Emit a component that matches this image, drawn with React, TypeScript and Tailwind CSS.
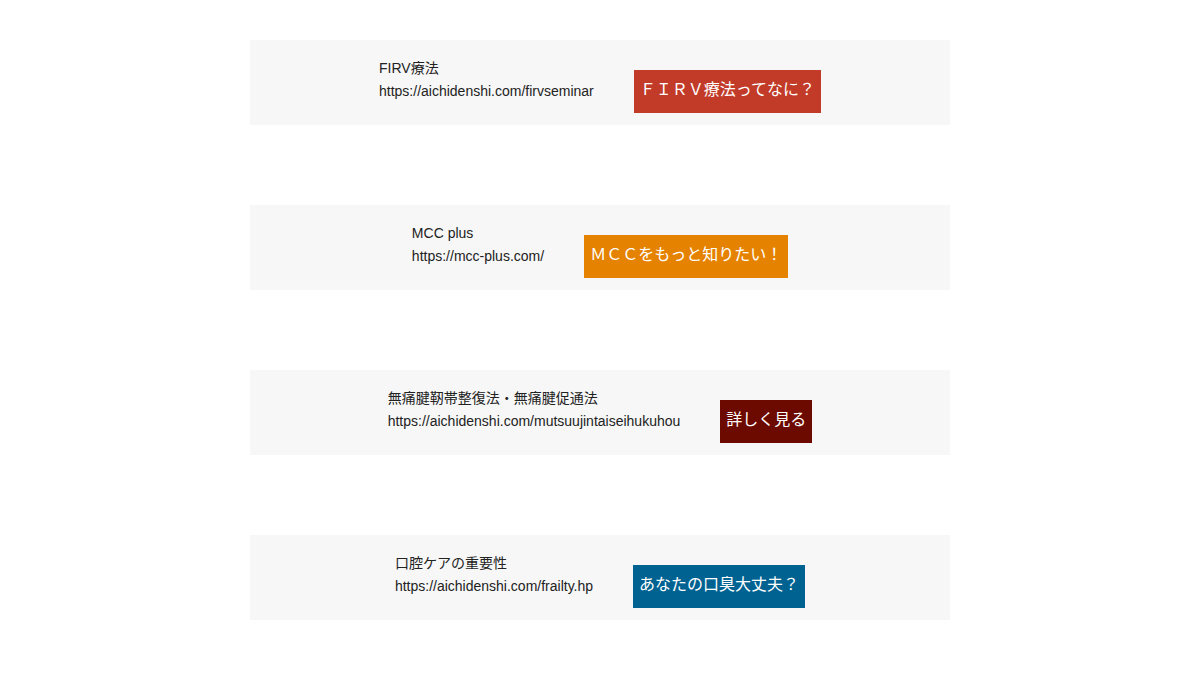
const links = [
  {
    title: 'FIRV療法',
    url: 'https://aichidenshi.com/firvseminar',
    label: 'ＦＩＲＶ療法ってなに？',
    color: 'bg-[#c23b29]',
  },
  {
    title: 'MCC plus',
    url: 'https://mcc-plus.com/',
    label: 'ＭＣＣをもっと知りたい！',
    color: 'bg-[#e58200]',
  },
  {
    title: '無痛腱靭帯整復法・無痛腱促通法',
    url: 'https://aichidenshi.com/mutsuujintaiseihukuhou',
    label: '詳しく見る',
    color: 'bg-[#6d0a00]',
  },
  {
    title: '口腔ケアの重要性',
    url: 'https://aichidenshi.com/frailty.hp',
    label: 'あなたの口臭大丈夫？',
    color: 'bg-[#006291]',
  },
];

export default function App() {
  return (
    <div
      className="min-h-screen bg-white flex flex-col items-center gap-20 pt-10"
      style={{ fontFamily: '"Liberation Sans", "Noto Sans CJK JP", sans-serif' }}
    >
      {links.map((item) => (
        <div key={item.url} className="w-[700px] h-[85px] bg-[#f7f7f7] flex justify-center items-start gap-10 pt-[17px]">
          <div className="text-[14px] leading-[23px] text-[#222]">
            <p>{item.title}</p>
            <p>{item.url}</p>
          </div>
          <a
            href="#"
            className={`${item.color} mt-[13px] h-[43px] px-[6px] pb-[3px] flex items-center text-white text-[16px] leading-none whitespace-nowrap`}
          >
            {item.label}
          </a>
        </div>
      ))}
    </div>
  );
}
